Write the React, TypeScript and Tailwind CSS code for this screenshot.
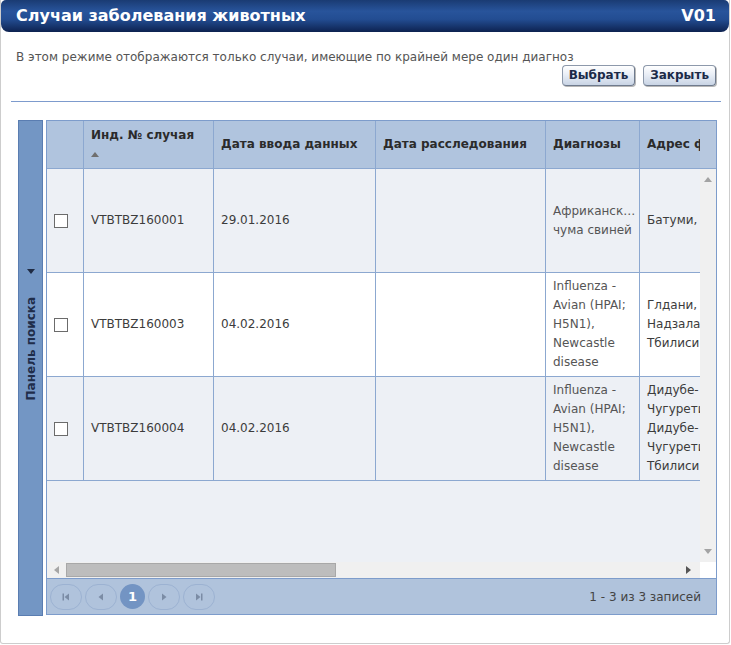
import { Fragment } from 'react';

interface CaseRow {
  id: string;
  entered: string;
  investigated: string;
  diagnoses: string[];
  address: string[];
}

const rows: CaseRow[] = [
  {
    id: 'VTBTBZ160001',
    entered: '29.01.2016',
    investigated: '',
    diagnoses: ['Африканск…', 'чума свиней'],
    address: ['Батуми, Аджария'],
  },
  {
    id: 'VTBTBZ160003',
    entered: '04.02.2016',
    investigated: '',
    diagnoses: ['Influenza -', 'Avian (HPAI;', 'H5N1),', 'Newcastle', 'disease'],
    address: ['Глдани, Глдани-', 'Надзаладеви,', 'Тбилиси'],
  },
  {
    id: 'VTBTBZ160004',
    entered: '04.02.2016',
    investigated: '',
    diagnoses: ['Influenza -', 'Avian (HPAI;', 'H5N1),', 'Newcastle', 'disease'],
    address: ['Дидубе-', 'Чугурети,', 'Дидубе-', 'Чугурети,', 'Тбилиси'],
  },
];

// column widths include the right border line
const colW = ['w-[37px]', 'w-[130px]', 'w-[162px]', 'w-[170px]', 'w-[94px]', 'w-[130px]'];

function Tri({ dir, className }: { dir: 'up' | 'down' | 'left' | 'right'; className?: string }) {
  const pts = {
    up: '0,6 4,1 8,6',
    down: '0,1 8,1 4,6',
    left: '6,0 6,8 1,4',
    right: '1,0 1,8 6,4',
  }[dir];
  const box = dir === 'up' || dir === 'down' ? '0 0 8 7' : '0 0 7 8';
  const size = dir === 'up' || dir === 'down' ? 'w-[8px] h-[7px]' : 'w-[7px] h-[8px]';
  return (
    <svg viewBox={box} preserveAspectRatio="none" className={`${size} ${className ?? ''}`}>
      <polygon points={pts} fill="currentColor" />
    </svg>
  );
}

function PagerBtn({ kind }: { kind: 'first' | 'prev' | 'next' | 'last' }) {
  return (
    <button className="w-[32px] h-[26px] rounded-full border border-[#9cb2d2] flex items-center justify-center text-[#7b8ca5]">
      <svg viewBox="0 0 10 10" className="w-[10px] h-[10px]">
        {kind === 'first' && (
          <>
            <rect x="1.5" y="1.5" width="1.5" height="7" fill="currentColor" />
            <polygon points="8,1.5 8,8.5 3.5,5" fill="currentColor" />
          </>
        )}
        {kind === 'prev' && <polygon points="7,1.5 7,8.5 2.5,5" fill="currentColor" />}
        {kind === 'next' && <polygon points="3,1.5 3,8.5 7.5,5" fill="currentColor" />}
        {kind === 'last' && (
          <>
            <polygon points="2,1.5 2,8.5 6.5,5" fill="currentColor" />
            <rect x="7" y="1.5" width="1.5" height="7" fill="currentColor" />
          </>
        )}
      </svg>
    </button>
  );
}

function ActionButton({ label }: { label: string }) {
  return (
    <button className="h-[21px] px-[6px] rounded-[4px] border border-[#8d99ab] border-b-[#6f7b8e] border-r-[#6f7b8e] bg-[linear-gradient(to_bottom,#ffffff_0%,#e9eef6_45%,#c9d4e5_100%)] text-[12px] font-bold text-[#1b2a48] leading-[19px] shadow-[1px_1px_0_#b7b7b7]">
      {label}
    </button>
  );
}

export default function App() {
  return (
    <div className="w-[731px] h-[645px] bg-white font-['DejaVu_Sans','Liberation_Sans',sans-serif]">
      <div className="w-[730px] h-[644px] border-x border-b border-[#cdcdcd] rounded-b-[3px] flex flex-col">
        {/* Title bar */}
        <div className="h-[32px] shrink-0 rounded-t-[5px] rounded-b-[8px] bg-[linear-gradient(to_bottom,#1a3b73_0%,#28549b_35%,#234d92_60%,#0d2250_100%)] flex items-center justify-between pl-[15px] pr-[13px]">
          <span className="text-white text-[16px] font-bold leading-none">Случаи заболевания животных</span>
          <span className="text-white text-[16px] font-bold leading-none">V01</span>
        </div>

        {/* Info */}
        <p className="mt-[17px] px-[15px] text-[12px] leading-[16px] text-[#555]">
          В этом режиме отображаются только случаи, имеющие по крайней мере один диагноз
        </p>
        <div className="flex justify-end gap-[8px] pr-[13px]">
          <ActionButton label="Выбрать" />
          <ActionButton label="Закрыть" />
        </div>
        <div className="mt-[15px] ml-[10px] mr-[8px] h-px bg-[#7d9bcd]" />

        {/* Grid area */}
        <div className="mt-[18px] flex gap-[3px] pl-[17px] pr-[12px]">
          {/* Search panel (collapsed) */}
          <div className="w-[25px] h-[496px] shrink-0 bg-[#7396c4] border border-[#5a7db1] flex flex-col items-center pt-[147px] gap-[22px]">
            <Tri dir="down" className="text-[#1f2b44]" />
            <span className="[writing-mode:vertical-rl] rotate-180 text-[12px] font-bold text-[#1f2d4a] leading-[14px]">
              Панель поиска
            </span>
          </div>

          {/* Grid */}
          <div className="flex-1 min-w-0 h-[495px] border border-[#7d9ccb] flex flex-col">
            {/* Header */}
            <div className="flex h-[48px] shrink-0 border-b border-[#8ca8d0]">
              <div className="flex-1 min-w-0 overflow-hidden bg-[#b0c4de]">
                <div className="flex h-full text-[12px] font-bold text-[#2b2b2b] leading-[19px]">
                  <div className={`${colW[0]} shrink-0 border-r border-[#8ca8d0]`} />
                  <div className={`${colW[1]} shrink-0 border-r border-[#8ca8d0] px-[7px] flex flex-col justify-center`}>
                    <span>Инд. № случая</span>
                    <span className="h-[19px] flex items-center">
                      <Tri dir="up" className="text-[#6f6f6f] w-[7px] h-[6px]" />
                    </span>
                  </div>
                  <div className={`${colW[2]} shrink-0 border-r border-[#8ca8d0] px-[7px] flex items-center`}>
                    Дата ввода данных
                  </div>
                  <div className={`${colW[3]} shrink-0 border-r border-[#8ca8d0] px-[7px] flex items-center`}>
                    Дата расследования
                  </div>
                  <div className={`${colW[4]} shrink-0 border-r border-[#8ca8d0] px-[7px] flex items-center`}>
                    Диагнозы
                  </div>
                  <div className={`${colW[5]} shrink-0 px-[7px] flex items-center whitespace-nowrap`}>
                    Адрес фермы
                  </div>
                </div>
              </div>
              <div className="w-[16px] shrink-0 bg-[#b7c8df]" />
            </div>

            {/* Body + vertical scrollbar */}
            <div className="flex flex-1 min-h-0">
              <div className="flex-1 min-w-0 overflow-hidden bg-[#edf0f5] flex flex-col">
                {rows.map((r, i) => (
                  <div
                    key={r.id}
                    className={`flex h-[104px] shrink-0 border-b border-[#8ca8d0] text-[12px] leading-[19px] text-[#3c3c3c] ${
                      i % 2 === 1 ? 'bg-white' : 'bg-[#edf0f5]'
                    }`}
                  >
                    <div className={`${colW[0]} shrink-0 border-r border-[#8ca8d0] pl-[7px] flex items-center`}>
                      <span className="w-[14px] h-[14px] border border-[#6b6b6b] bg-white" />
                    </div>
                    <div className={`${colW[1]} shrink-0 border-r border-[#8ca8d0] px-[7px] flex items-center`}>
                      {r.id}
                    </div>
                    <div className={`${colW[2]} shrink-0 border-r border-[#8ca8d0] px-[7px] flex items-center`}>
                      {r.entered}
                    </div>
                    <div className={`${colW[3]} shrink-0 border-r border-[#8ca8d0] px-[7px] flex items-center`}>
                      {r.investigated}
                    </div>
                    <div className={`${colW[4]} shrink-0 border-r border-[#8ca8d0] px-[7px] flex flex-col justify-center text-[#555]`}>
                      {r.diagnoses.map((d, j) => (
                        <Fragment key={j}>
                          <span className="whitespace-nowrap">{d}</span>
                        </Fragment>
                      ))}
                    </div>
                    <div className={`${colW[5]} shrink-0 px-[7px] flex flex-col justify-center whitespace-nowrap`}>
                      {r.address.map((a, j) => (
                        <span key={j}>{a}</span>
                      ))}
                    </div>
                  </div>
                ))}
              </div>
              <div className="w-[16px] shrink-0 bg-[#f0f0f0] flex flex-col items-center justify-between py-[7px] text-[#a3a3a3]">
                <Tri dir="up" className="w-[7px] h-[5px]" />
                <Tri dir="down" className="w-[7px] h-[5px]" />
              </div>
            </div>

            {/* Horizontal scrollbar */}
            <div className="flex h-[16px] shrink-0">
              <div className="flex-1 min-w-0 bg-[#f0f0f0] flex items-center pl-[6px] pr-[8px]">
                <Tri dir="left" className="w-[5px] h-[7px] text-[#a6a6a6]" />
                <div className="ml-[6px] w-[270px] h-[14px] bg-[#bdbdbd] border border-[#a8a8a8]" />
                <div className="flex-1" />
                <Tri dir="right" className="w-[5px] h-[7px] text-[#555]" />
              </div>
              <div className="w-[16px] shrink-0 bg-white" />
            </div>

            {/* Pager */}
            <div className="h-[36px] shrink-0 border-t border-[#7d9ccb] bg-[#b0c3dc] flex items-center pl-[3px] pr-[15px]">
              <div className="flex items-center gap-[3px]">
                <PagerBtn kind="first" />
                <PagerBtn kind="prev" />
                <span className="w-[25px] h-[25px] rounded-full bg-[#7394c3] text-white text-[13px] font-bold flex items-center justify-center">
                  1
                </span>
                <PagerBtn kind="next" />
                <PagerBtn kind="last" />
              </div>
              <span className="ml-auto text-[12px] text-[#444]">1 - 3 из 3 записей</span>
            </div>
          </div>
        </div>
      </div>
    </div>
  );
}
